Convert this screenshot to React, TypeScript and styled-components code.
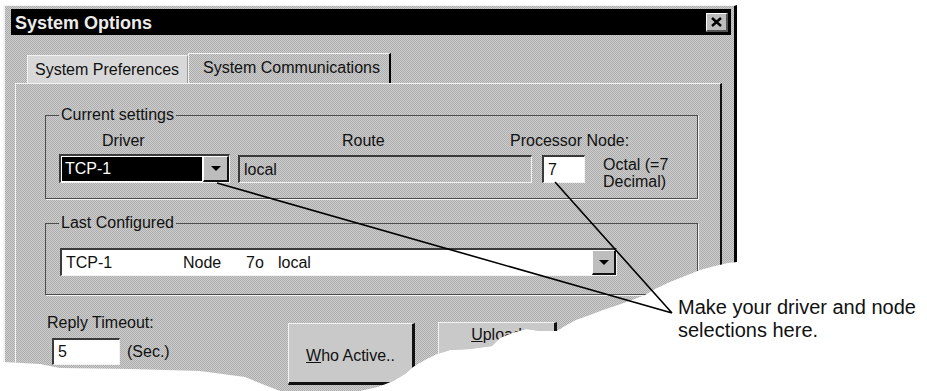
import React from "react";
import styled, { createGlobalStyle } from "styled-components";

const FACE = "#bdbdbd";
const LIGHT = "#f2f2f2";
const SHADE = "#3a3a3a";
const GRAIN = `conic-gradient(#adadad 25%, #cdcdcd 0 50%, #adadad 0 75%, #cdcdcd 0) 0 0 / 2px 2px`;

// torn paper edge, in page pixels; the window sits at 3,5 on the page
const tornEdge = [
  [3, 5], [737, 5], [737, 262], [728, 263], [715, 266], [700, 270], [685, 276],
  [670, 282], [655, 289], [645, 295], [632, 300], [618, 305], [603, 310],
  [590, 315], [576, 320], [565, 326], [557, 331], [540, 331], [526, 329],
  [512, 333], [500, 338], [492, 346], [470, 349], [450, 350], [437, 354],
  [425, 360], [413, 367], [405, 374], [393, 381], [378, 387], [360, 391],
  [280, 391], [262, 384], [245, 377], [200, 371], [130, 369], [60, 368],
  [40, 364], [3, 362],
]
  .map(([x, y]) => `${x - 3}px ${y - 5}px`)
  .join(", ");

const GlobalStyle = createGlobalStyle`
  html, body {
    margin: 0;
    padding: 0;
    background: #fff;
  }
  body {
    font-family: "Liberation Sans", Arial, sans-serif;
    color: #111;
  }
`;

const Page = styled.div`
  position: relative;
  width: 927px;
  height: 391px;
  overflow: hidden;
  padding: 5px 0 0 3px;
  box-sizing: border-box;
`;

const Window = styled.div`
  width: 734px;
  height: 386px;
  box-sizing: border-box;
  display: flex;
  flex-direction: column;
  background: ${GRAIN};
  border-top: 1px solid ${LIGHT};
  border-left: 2px solid ${LIGHT};
  border-right: 3px solid #000;
  padding: 3px 3px 0 6px;
  clip-path: polygon(${tornEdge});
`;

const TitleBar = styled.div`
  height: 26px;
  flex-shrink: 0;
  display: flex;
  align-items: center;
  background: #000;
  padding-left: 4px;
`;

const Title = styled.div`
  flex: 1;
  padding-top: 2px;
  color: #ececec;
  font-weight: bold;
  font-size: 18px;
  line-height: 20px;
`;

const CloseButton = styled.div`
  width: 22px;
  height: 19px;
  margin-right: 3px;
  box-sizing: border-box;
  display: flex;
  align-items: center;
  justify-content: center;
  background: ${FACE};
  border-top: 1px solid #fff;
  border-left: 1px solid #fff;
  border-right: 2px solid #555;
  border-bottom: 2px solid #555;
`;

const TabStrip = styled.div`
  height: 48px;
  flex-shrink: 0;
  box-sizing: border-box;
  display: flex;
  align-items: flex-end;
  padding-left: 16px;
`;

const Tab = styled.div<{ $active?: boolean; $w: number; $pl: number }>`
  width: ${(p) => p.$w}px;
  height: ${(p) => (p.$active ? 30 : 28)}px;
  box-sizing: border-box;
  padding: 5px 0 0 ${(p) => p.$pl}px;
  font-size: 16px;
  line-height: 18px;
  white-space: nowrap;
  background: ${(p) => (p.$active ? "transparent" : "#d8d8d8")};
  border-top: 1px solid ${LIGHT};
  border-left: 1px solid ${LIGHT};
  border-right: ${(p) => (p.$active ? "2px solid #000" : "1px solid #9a9a9a")};
`;

const Panel = styled.div`
  flex: 1;
  display: flex;
  flex-direction: column;
  margin: 0 9px 0 4px;
  padding: 22px 22px 0 29px;
  border-top: 1px solid ${LIGHT};
  border-left: 1px solid ${LIGHT};
  border-right: 2px solid #111;
`;

const Group = styled.fieldset<{ $mt?: number }>`
  margin: ${(p) => p.$mt || 0}px 0 0 0;
  padding: ${(p) => (p.$mt ? "16px 13px 18px" : "8px 13px 8px")};
  min-width: 0;
  border: 1px solid #4c4c4c;
  box-shadow: 1px 1px 0 ${LIGHT};
`;

const GroupLegend = styled.legend`
  padding: 0 2px;
  font-size: 16px;
  line-height: 18px;
`;

const LabelRow = styled.div`
  display: flex;
  font-size: 16px;
  line-height: 18px;
`;

const LabelCell = styled.div<{ $w?: number; $pad: number }>`
  ${(p) => (p.$w ? `width: ${p.$w}px;` : "flex: 1;")}
  box-sizing: border-box;
  padding-left: ${(p) => p.$pad}px;
  white-space: nowrap;
`;

const FieldRow = styled.div`
  display: flex;
  align-items: flex-start;
  margin-top: 4px;
`;

const Combo = styled.div<{ $w: number; $h: number; $ml?: number }>`
  width: ${(p) => p.$w}px;
  height: ${(p) => p.$h}px;
  margin-left: ${(p) => p.$ml || 0}px;
  box-sizing: border-box;
  display: flex;
  border-top: 2px solid ${SHADE};
  border-left: 2px solid ${SHADE};
  border-right: 1px solid ${LIGHT};
  border-bottom: 1px solid ${LIGHT};
  background: #fff;
`;

const ComboText = styled.div<{ $selected?: boolean }>`
  flex: 1;
  display: flex;
  align-items: center;
  padding-left: ${(p) => (p.$selected ? 3 : 4)}px;
  margin: ${(p) => (p.$selected ? "1px" : "0")};
  font-size: 16px;
  white-space: nowrap;
  background: ${(p) => (p.$selected ? "#000" : "#fff")};
  color: ${(p) => (p.$selected ? "#fff" : "#111")};
`;

const Cell = styled.span<{ $w?: number }>`
  display: inline-block;
  ${(p) => (p.$w ? `width: ${p.$w}px;` : "")}
`;

const DropButton = styled.div<{ $w: number }>`
  width: ${(p) => p.$w}px;
  box-sizing: border-box;
  display: flex;
  align-items: center;
  justify-content: center;
  background: ${FACE};
  border-top: 1px solid #fff;
  border-left: 1px solid #fff;
  border-right: 2px solid #111;
  border-bottom: 2px solid #111;
`;

const Arrow = styled.span`
  width: 0;
  height: 0;
  border-left: 5px solid transparent;
  border-right: 5px solid transparent;
  border-top: 5px solid #000;
`;

const TextBox = styled.div<{ $w: number; $h: number; $ml?: number; $mt?: number; $white?: boolean }>`
  width: ${(p) => p.$w}px;
  height: ${(p) => p.$h}px;
  margin-left: ${(p) => p.$ml || 0}px;
  margin-top: ${(p) => p.$mt || 0}px;
  box-sizing: border-box;
  display: flex;
  align-items: center;
  padding-left: 4px;
  font-size: 16px;
  background: ${(p) => (p.$white ? "#fff" : "transparent")};
  border-top: 2px solid ${SHADE};
  border-left: 2px solid ${SHADE};
  border-right: 1px solid ${LIGHT};
  border-bottom: 1px solid ${LIGHT};
`;

const Note = styled.div`
  margin: 2px 0 0 18px;
  font-size: 16px;
  line-height: 17px;
  white-space: nowrap;
`;

const BottomRow = styled.div`
  display: flex;
  align-items: flex-start;
  margin-top: 19px;
`;

const TimeoutCol = styled.div`
  width: 243px;
  font-size: 16px;
  line-height: 18px;
`;

const Caption = styled.div`
  margin-left: 2px;
`;

const InputRow = styled.div`
  display: flex;
  align-items: center;
  margin: 6px 0 0 7px;
`;

const Unit = styled.span`
  margin-left: 7px;
`;

const PushButton = styled.div<{ $w: number; $ml?: number; $mt: number; $top?: boolean }>`
  width: ${(p) => p.$w}px;
  height: 62px;
  margin: ${(p) => p.$mt}px 0 0 ${(p) => p.$ml || 0}px;
  box-sizing: border-box;
  display: flex;
  justify-content: center;
  align-items: ${(p) => (p.$top ? "flex-start" : "center")};
  padding-top: ${(p) => (p.$top ? 3 : 6)}px;
  font-size: 16px;
  line-height: 18px;
  background: #c9c9c9;
  border-top: 1px solid ${LIGHT};
  border-left: 1px solid ${LIGHT};
  border-right: 3px solid #111;
  border-bottom: 3px solid #111;
  u {
    text-decoration: underline;
  }
`;

const Callout = styled.div`
  position: absolute;
  left: 678px;
  top: 296px;
  font-size: 20px;
  line-height: 23px;
  color: #111;
  white-space: nowrap;
`;

const Leaders = styled.svg`
  position: absolute;
  left: 0;
  top: 0;
  pointer-events: none;
`;

export default function App() {
  return (
    <>
      <GlobalStyle />
      <Page>
        <Window>
          <TitleBar>
            <Title>System Options</Title>
            <CloseButton>
              <svg width="11" height="10" viewBox="0 0 11 10">
                <path d="M1 1 L10 9 M10 1 L1 9" stroke="#000" strokeWidth="2.4" />
              </svg>
            </CloseButton>
          </TitleBar>

          <TabStrip>
            <Tab $w={161} $pl={7}>System Preferences</Tab>
            <Tab $active $w={203} $pl={14}>System Communications</Tab>
          </TabStrip>

          <Panel>
            <Group>
              <GroupLegend>Current settings</GroupLegend>
              <LabelRow>
                <LabelCell $w={179} $pad={43}>Driver</LabelCell>
                <LabelCell $w={272} $pad={104}>Route</LabelCell>
                <LabelCell $pad={0}>Processor Node:</LabelCell>
              </LabelRow>
              <FieldRow>
                <Combo $w={171} $h={29}>
                  <ComboText $selected>TCP-1</ComboText>
                  <DropButton $w={26}>
                    <Arrow />
                  </DropButton>
                </Combo>
                <TextBox $w={294} $h={28} $ml={8} $mt={1}>local</TextBox>
                <TextBox $w={43} $h={28} $ml={10} $mt={1} $white>7</TextBox>
                <Note>
                  Octal (=7
                  <br />
                  Decimal)
                </Note>
              </FieldRow>
            </Group>

            <Group $mt={15}>
              <GroupLegend>Last Configured</GroupLegend>
              <Combo $w={557} $h={28} $ml={1}>
                <ComboText>
                  <Cell $w={117}>TCP-1</Cell>
                  <Cell $w={63}>Node</Cell>
                  <Cell $w={32}>7o</Cell>
                  <Cell>local</Cell>
                </ComboText>
                <DropButton $w={24}>
                  <Arrow />
                </DropButton>
              </Combo>
            </Group>

            <BottomRow>
              <TimeoutCol>
                <Caption>Reply Timeout:</Caption>
                <InputRow>
                  <TextBox $w={68} $h={27} $white>5</TextBox>
                  <Unit>(Sec.)</Unit>
                </InputRow>
              </TimeoutCol>
              <PushButton $w={127} $mt={9}>
                <span>
                  <u>W</u>ho Active..
                </span>
              </PushButton>
              <PushButton $w={119} $ml={23} $mt={8} $top>
                <span>
                  <u>U</u>pload
                </span>
              </PushButton>
            </BottomRow>
          </Panel>
        </Window>

        <Leaders width="927" height="391" viewBox="0 0 927 391">
          <path d="M217 183 L672 313 M555 182 L672 313" stroke="#000" strokeWidth="1.6" fill="none" />
        </Leaders>
        <Callout>
          Make your driver and node
          <br />
          selections here.
        </Callout>
      </Page>
    </>
  );
}
